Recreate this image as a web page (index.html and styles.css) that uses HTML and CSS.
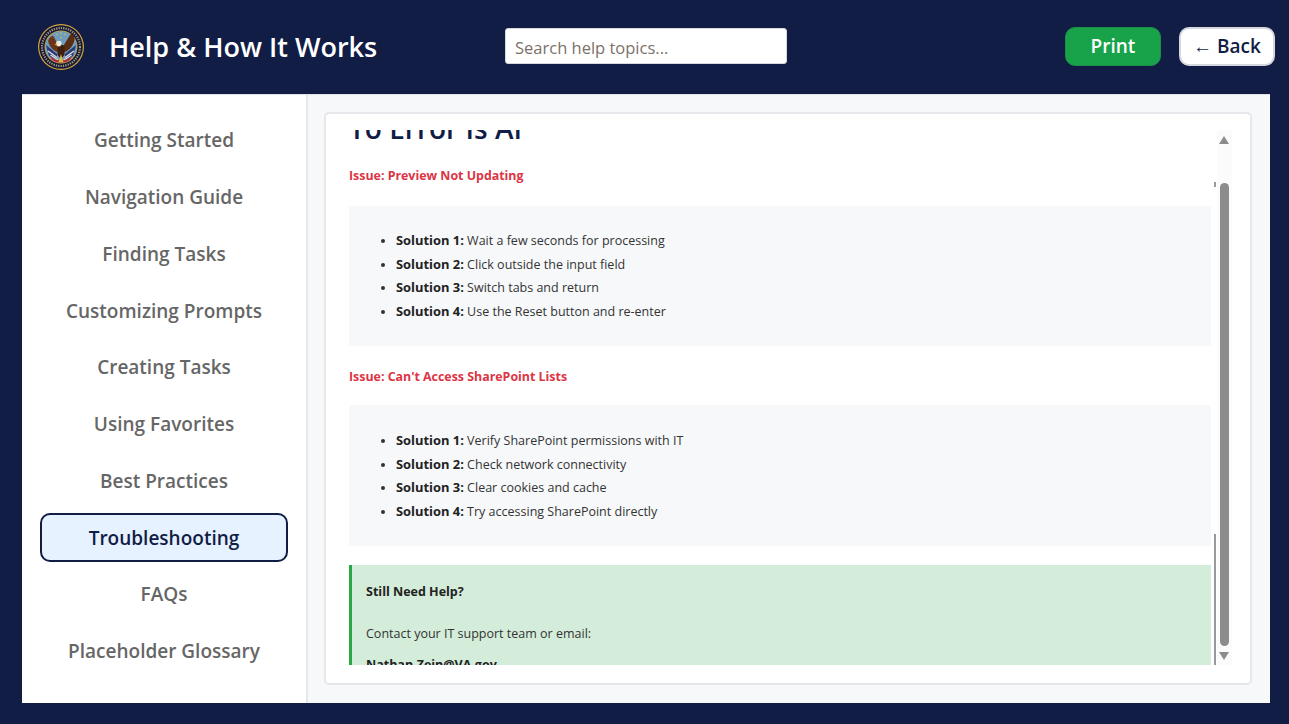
FILE: index.html
```html
<!DOCTYPE html>
<html lang="en">
<head>
<meta charset="utf-8">
<title>Help &amp; How It Works</title>
<link rel="stylesheet" href="styles.css">
</head>
<body>
<header class="topbar">
  <div class="brand">
    <svg class="seal" viewBox="0 0 46 46" width="46" height="46" aria-hidden="true">
      <circle cx="23" cy="23" r="23" fill="#d2a63c"/>
      <circle cx="23" cy="23" r="21.800" fill="#14183a"/>
      <circle cx="23" cy="23" r="19" fill="none" stroke="#a89c78" stroke-width="2.200" stroke-dasharray="1.300 1.100"/>
      <circle cx="23" cy="23" r="16.500" fill="#c9a13a"/>
      <circle cx="23" cy="23" r="15.700" fill="#6f9dbd"/>
      <path d="M8 21 L19 30 L19 36 L11 32 Z" fill="#2a3873"/>
      <path d="M38 21 L27 30 L27 36 L35 32 Z" fill="#2a3873"/>
      <path d="M10 27 L19 33.500 M12.500 31 L20 36 M36 27 L27 33.500 M33.500 31 L26 36" stroke="#e4e4ea" stroke-width="1.300"/>
      <path d="M12 32 Q23 41 34 32 L32 36 Q23 42 14 36 Z" fill="#b02f3a"/>
      <path d="M22 24 L15 11.500 Q9 14 10.500 19 Q13 26 21 29 Z" fill="#6a3518"/>
      <path d="M24 24 L33 9.500 Q38 12 36 18 Q33 26 25 29 Z" fill="#5a2c14"/>
      <path d="M19.500 22 Q23 19 26.500 22 L26.500 31 L23 35 L19.500 31 Z" fill="#3f1f0e"/>
      <circle cx="20.800" cy="19.600" r="2.800" fill="#efe9dc"/>
      <path d="M18.500 19 L16.300 20.800 L19.200 21.200 Z" fill="#d9a52e"/>
      <path d="M23 30 L25.500 38.500 L20.500 38.500 Z" fill="#e0b93f"/>
      <path d="M19 9.500 l1.100 1.800 -2.200 0 Z M23 8 l1.100 1.800 -2.200 0 Z M27 9.500 l1.100 1.800 -2.200 0 Z M23 12.500 l1.100 1.800 -2.200 0 Z" fill="#dcc04e"/>
    </svg>
    <h1 class="title">Help &amp; How It Works</h1>
  </div>
  <input class="search" type="text" placeholder="Search help topics...">
  <div class="actions">
    <button class="btn btn-print" type="button">Print</button>
    <button class="btn btn-back" type="button"><span class="arrow">←</span> Back</button>
  </div>
</header>

<main class="shell">
  <nav class="sidebar">
    <a class="nav-item">Getting Started</a>
    <a class="nav-item">Navigation Guide</a>
    <a class="nav-item">Finding Tasks</a>
    <a class="nav-item">Customizing Prompts</a>
    <a class="nav-item">Creating Tasks</a>
    <a class="nav-item">Using Favorites</a>
    <a class="nav-item">Best Practices</a>
    <a class="nav-item active">Troubleshooting</a>
    <a class="nav-item">FAQs</a>
    <a class="nav-item">Placeholder Glossary</a>
  </nav>
  <section class="content">
    <div class="card">
      <div class="viewport">
        <div class="scroller">
          <h2 class="heading">To Error Is AI</h2>
          <h3 class="issue">Issue: Preview Not Updating</h3>
          <div class="solutions">
            <ul>
              <li><strong>Solution 1:</strong> Wait a few seconds for processing</li>
              <li><strong>Solution 2:</strong> Click outside the input field</li>
              <li><strong>Solution 3:</strong> Switch tabs and return</li>
              <li><strong>Solution 4:</strong> Use the Reset button and re-enter</li>
            </ul>
          </div>
          <h3 class="issue">Issue: Can't Access SharePoint Lists</h3>
          <div class="solutions solutions-tight">
            <ul>
              <li><strong>Solution 1:</strong> Verify SharePoint permissions with IT</li>
              <li><strong>Solution 2:</strong> Check network connectivity</li>
              <li><strong>Solution 3:</strong> Clear cookies and cache</li>
              <li><strong>Solution 4:</strong> Try accessing SharePoint directly</li>
            </ul>
          </div>
          <div class="callout">
            <p class="callout-title">Still Need Help?</p>
            <p class="callout-text">Contact your IT support team or email:</p>
            <p class="callout-mail">Nathan.Zein@VA.gov</p>
          </div>
        </div>
        <div class="inner-line"></div>
        <div class="tick"></div>
        <div class="scrollbar">
          <div class="sb-up"></div>
          <div class="sb-thumb"></div>
          <div class="sb-down"></div>
        </div>
      </div>
    </div>
  </section>
</main>
</body>
</html>
```
FILE: styles.css
```css
* { box-sizing: border-box; }
html, body { margin: 0; height: 100%; overflow: hidden; }
body {
  background: #111d45;
  font-family: "Open Sans", "Noto Sans", sans-serif;
  display: flex;
  flex-direction: column;
  height: 724px;
}
.topbar {
  height: 94px;
  flex: none;
  display: flex;
  align-items: center;
  padding: 0 14px 0 38px;
}
.brand { display: flex; align-items: center; gap: 25px; width: 467px; }
.seal { display: block; flex: none; margin-top: -1px; }
.title {
  margin: -2px 0 0;
  font-family: "Open Sans", sans-serif;
  font-size: 27px;
  font-weight: 600;
  color: #fff;
  white-space: nowrap;
}
.search {
  width: 282px;
  height: 36px;
  margin-top: -2px;
  border: 1px solid #d5d8de;
  border-radius: 3px;
  background: #fff;
  padding: 2px 9px 0;
  font-family: "Open Sans", sans-serif;
  font-size: 16.500px;
  color: #333;
  outline: none;
}
.search::placeholder { color: #7b7168; opacity: 1; }
.actions { margin-left: auto; display: flex; gap: 18px; margin-top: -1px; }
.btn {
  height: 39px;
  border-radius: 10px;
  font-family: "Open Sans", sans-serif;
  font-size: 19px;
  font-weight: 600;
  padding: 0;
  line-height: 1;
}
.btn-print { width: 96px; background: #18a34a; border: 1px solid #1c8f47; color: #fff; }
.btn-back { width: 96px; background: #fff; border: 2px solid #d5d8de; color: #111d45; }
.arrow { font-family: "Liberation Sans", sans-serif; font-weight: 400; font-size: 19px; }

.shell {
  height: 609px;
  flex: none;
  margin: 0 19px 0 22px;
  display: flex;
  background: #f7f8fa;
  border-top: 1px solid #dfe2e8;
}
.sidebar {
  width: 286px;
  flex: none;
  background: #fff;
  border-right: 2px solid #e5e7eb;
  padding: 21px 18px 0;
  display: flex;
  flex-direction: column;
  gap: 8.400px;
}
.nav-item {
  height: 48.400px;
  display: flex;
  align-items: center;
  justify-content: center;
  font-size: 19px;
  font-weight: 600;
  color: #666;
  border: 2px solid transparent;
  border-radius: 10px;
  white-space: nowrap;
}
.nav-item.active {
  background: #e6f2ff;
  border-color: #111d45;
  color: #111d45;
}
.content { flex: 1; padding: 17px 18px 17px 16px; }
.card {
  height: 573px;
  background: #fff;
  border: 2px solid #e5e7eb;
  border-radius: 5px;
  padding: 16px 0 0 23px;
}
.viewport { height: 535px; position: relative; overflow: hidden; }
.scroller { width: 862px; }
.heading {
  margin: -18px 0 0;
  height: 32px;
  font-family: "Open Sans", sans-serif;
  font-size: 28px;
  line-height: 32px;
  font-weight: 600;
  color: #111d45;
}
.issue {
  margin: 0;
  font-size: 12.400px;
  line-height: 18px;
  font-weight: 700;
  color: #dc3545;
}
.heading + .issue { margin-top: 23px; }
.solutions {
  background: #f7f8fa;
  margin-top: 21px;
  height: 140px;
  padding: 23px 0 0;
}
.solutions-tight {
  margin-top: 19px;
  height: 141px;
  padding-top: 24px;
}
.solutions + .issue { margin-top: 22px; }
.solutions ul { margin: 0; padding: 0 0 0 47px; }
.solutions li {
  font-size: 12.500px;
  line-height: 23.700px;
  color: #333;
}
.solutions li strong { color: #222; font-weight: 700; font-size: 12.900px; }
.callout {
  margin-top: 19px;
  background: #d4edda;
  border-left: 3px solid #28a745;
  padding: 18px 14px;
  height: 120px;
}
.callout p { margin: 0; font-size: 12.500px; line-height: 18px; color: #333; }
.callout .callout-title { font-weight: 700; color: #222; }
.callout .callout-text { margin-top: 24px; }
.callout .callout-mail { font-weight: 700; margin-top: 13px; color: #222; }

.scrollbar {
  position: absolute;
  top: 0; bottom: 0;
  right: 18px;
  width: 15px;
  background: #fbfbfc;
}
.sb-up {
  position: absolute; top: 6px; left: 2px;
  width: 0; height: 0;
  border-left: 5.500px solid transparent;
  border-right: 5.500px solid transparent;
  border-bottom: 8px solid #8c8c8c;
}
.sb-thumb {
  position: absolute; top: 53px; left: 3px;
  width: 9px; height: 463px;
  background: #8c8c8c;
  border-radius: 4.500px;
}
.sb-down {
  position: absolute; top: 522px; left: 2px;
  width: 0; height: 0;
  border-left: 5.500px solid transparent;
  border-right: 5.500px solid transparent;
  border-top: 8px solid #8c8c8c;
}
.inner-line {
  position: absolute;
  left: 865px; top: 404px; bottom: 0;
  width: 2px;
  background: #9a9a9a;
}
.tick {
  position: absolute;
  left: 865px; top: 52px;
  width: 2px; height: 5px;
  background: #9a9a9a;
}
```
